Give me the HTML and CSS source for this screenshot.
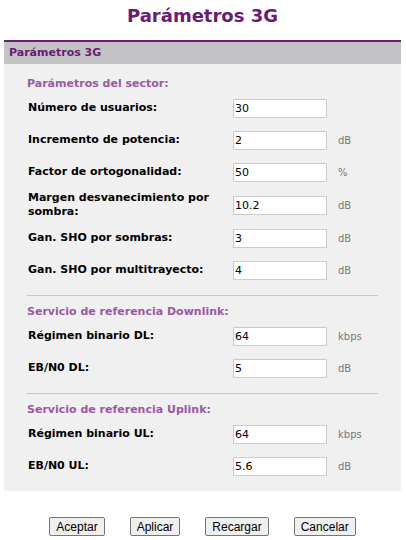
FILE: index.html
```html
<!DOCTYPE html>
<html lang="es">
<head>
    <meta charset="UTF-8">
    <title>Parámetros 3G</title>
    <link rel="stylesheet" href="styles.css">
</head>
<body>
    <h1 class="titulo">Parámetros 3G</h1>
    <div class="panel">
        <div class="panel-cab">Parámetros 3G</div>
        <div class="panel-cuerpo">
            <div class="seccion">
                <div class="seccion-tit">Parámetros del sector:</div>
                <div class="fila">
                    <label class="etiqueta">Número de usuarios:</label>
                    <input class="campo" type="text" value="30">
                    <span class="unidad"></span>
                </div>
                <div class="fila">
                    <label class="etiqueta">Incremento de potencia:</label>
                    <input class="campo" type="text" value="2">
                    <span class="unidad">dB</span>
                </div>
                <div class="fila">
                    <label class="etiqueta">Factor de ortogonalidad:</label>
                    <input class="campo" type="text" value="50">
                    <span class="unidad">%</span>
                </div>
                <div class="fila">
                    <label class="etiqueta">Margen desvanecimiento por sombra:</label>
                    <input class="campo" type="text" value="10.2">
                    <span class="unidad">dB</span>
                </div>
                <div class="fila">
                    <label class="etiqueta">Gan. SHO por sombras:</label>
                    <input class="campo" type="text" value="3">
                    <span class="unidad">dB</span>
                </div>
                <div class="fila">
                    <label class="etiqueta">Gan. SHO por multitrayecto:</label>
                    <input class="campo" type="text" value="4">
                    <span class="unidad">dB</span>
                </div>
            </div>
            <div class="seccion">
                <div class="seccion-tit">Servicio de referencia Downlink:</div>
                <div class="fila">
                    <label class="etiqueta">Régimen binario DL:</label>
                    <input class="campo" type="text" value="64">
                    <span class="unidad">kbps</span>
                </div>
                <div class="fila">
                    <label class="etiqueta">EB/N0 DL:</label>
                    <input class="campo" type="text" value="5">
                    <span class="unidad">dB</span>
                </div>
            </div>
            <div class="seccion">
                <div class="seccion-tit">Servicio de referencia Uplink:</div>
                <div class="fila">
                    <label class="etiqueta">Régimen binario UL:</label>
                    <input class="campo" type="text" value="64">
                    <span class="unidad">kbps</span>
                </div>
                <div class="fila">
                    <label class="etiqueta">EB/N0 UL:</label>
                    <input class="campo" type="text" value="5.6">
                    <span class="unidad">dB</span>
                </div>
            </div>
        </div>
    </div>
    <div class="botones">
        <button class="boton">Aceptar</button>
        <button class="boton">Aplicar</button>
        <button class="boton">Recargar</button>
        <button class="boton">Cancelar</button>
    </div>
</body>
</html>
```

FILE: styles.css
```css
* {
    margin: 0;
    padding: 0;
    box-sizing: border-box;
}

body {
    font-family: "DejaVu Sans", Verdana, sans-serif;
    background: #fff;
    padding: 0 5px 0 4px;
}

.titulo {
    height: 40px;
    line-height: 31px;
    text-align: center;
    font-size: 18px;
    color: #6a1b74;
}

.panel {
    border-top: 2px solid #6b1c73;
    background: #f0f0f0;
}

.panel-cab {
    height: 22px;
    line-height: 22px;
    padding-left: 5px;
    background: #c3c3c5;
    color: #6a1b74;
    font-size: 11px;
    font-weight: bold;
}

.panel-cuerpo {
    padding: 12px 23px 9px;
}

.seccion + .seccion {
    border-top: 1px solid #c8c8c8;
    margin-top: 9px;
    padding-top: 8px;
}

.seccion-tit {
    height: 16px;
    line-height: 16px;
    color: #9b59a0;
    font-size: 11px;
    font-weight: bold;
}

.fila {
    display: flex;
    align-items: center;
    min-height: 32px;
}

.etiqueta {
    width: 206px;
    padding: 3px 10px 3px 1px;
    font-size: 11px;
    font-weight: bold;
    line-height: 14px;
    color: #000;
}

.campo {
    width: 94px;
    height: 19px;
    border: 1px solid #cbcbcb;
    background: #fff;
    padding: 0 1px;
    font-family: "DejaVu Sans", Verdana, sans-serif;
    font-size: 11px;
    color: #000;
    outline: none;
}

.unidad {
    margin-left: 11px;
    font-size: 10px;
    color: #777;
}

.botones {
    display: flex;
    justify-content: center;
    gap: 25px;
    margin-top: 26px;
}

.boton {
    height: 19px;
    padding: 0 6px;
    border: 1px solid #767676;
    border-radius: 2px;
    background: #efefef;
    font-family: "Liberation Sans", Arial, sans-serif;
    font-size: 12px;
    color: #000;
}
```
